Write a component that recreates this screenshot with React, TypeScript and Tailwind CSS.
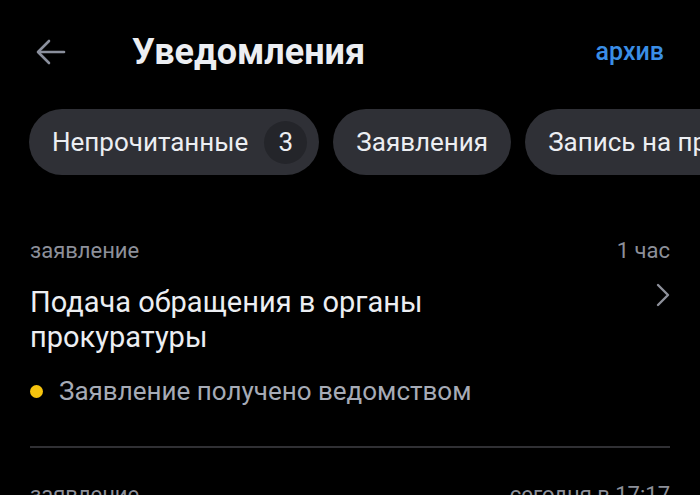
const chips = [
    { label: 'Непрочитанные', count: 3 },
    { label: 'Заявления' },
    { label: 'Запись на прием' },
];

function Item({ kind, time, title, status }: { kind: string; time: string; title: string; status?: string }) {
    return (
        <div className="px-[30px]">
            <div className="flex justify-between items-center h-[20px] text-[22px] text-[#8d909a]">
                <span>{kind}</span>
                <span>{time}</span>
            </div>
            <div className="flex justify-between items-start mt-[25px]">
                <p className="text-[29px] leading-[35px] text-[#eceef2] w-[470px]">{title}</p>
                <svg className="mt-[-2px]" width="14" height="24" viewBox="0 0 14 24" fill="none" stroke="#8d909a" strokeWidth="2.4" strokeLinecap="round" strokeLinejoin="round">
                    <path d="M2 2l10 10L2 22" />
                </svg>
            </div>
            {status && (
                <div className="flex items-center mt-[21px] h-[30px]">
                    <span className="w-[13px] h-[13px] rounded-full bg-[#f6c40e]" />
                    <span className="ml-[16px] text-[26px] text-[#a6abb6]">{status}</span>
                </div>
            )}
        </div>
    );
}

export default function App() {
    return (
        <main className="w-[700px] h-[495px] overflow-hidden bg-black font-['Roboto',sans-serif]">
            {/* Header */}
            <div className="h-[104px] flex items-center px-[36px]">
                <svg width="30" height="26" viewBox="0 0 30 26" fill="none" stroke="#8a8f9c" strokeWidth="2.6" strokeLinecap="round" strokeLinejoin="round">
                    <path d="M28 13H3" />
                    <path d="M13 2L2 13l11 11" />
                </svg>
                <h1 className="ml-[66px] text-[36px] font-bold text-[#eceef2]">Уведомления</h1>
                <span className="ml-auto text-[25px] font-medium text-[#3a8ee6]">архив</span>
            </div>

            {/* Filters */}
            <div className="flex gap-[14px] pl-[29px] mt-[5px] overflow-hidden whitespace-nowrap">
                {chips.map((c, i) => (
                    <div key={i} className={`shrink-0 h-[66px] rounded-full bg-[#2f3036] flex items-center pl-[23px] text-[26px] text-[#eceef2] ${c.count ? 'pr-[12px]' : 'pr-[23px]'}`}>
                        <span>{c.label}</span>
                        {c.count && (
                            <span className="ml-[16px] w-[43px] h-[43px] rounded-full bg-[#24252a] flex items-center justify-center">{c.count}</span>
                        )}
                    </div>
                ))}
            </div>

            <div className="mt-[65px]">
                <Item kind="заявление" time="1 час" title="Подача обращения в органы прокуратуры" status="Заявление получено ведомством" />
                <div className="mx-[30px] mt-[40px] h-[2px] bg-[#303034]" />
                <div className="mt-[36px]">
                    <Item kind="заявление" time="сегодня в 17:17" title="Запись на прием" />
                </div>
            </div>
        </main>
    );
}
